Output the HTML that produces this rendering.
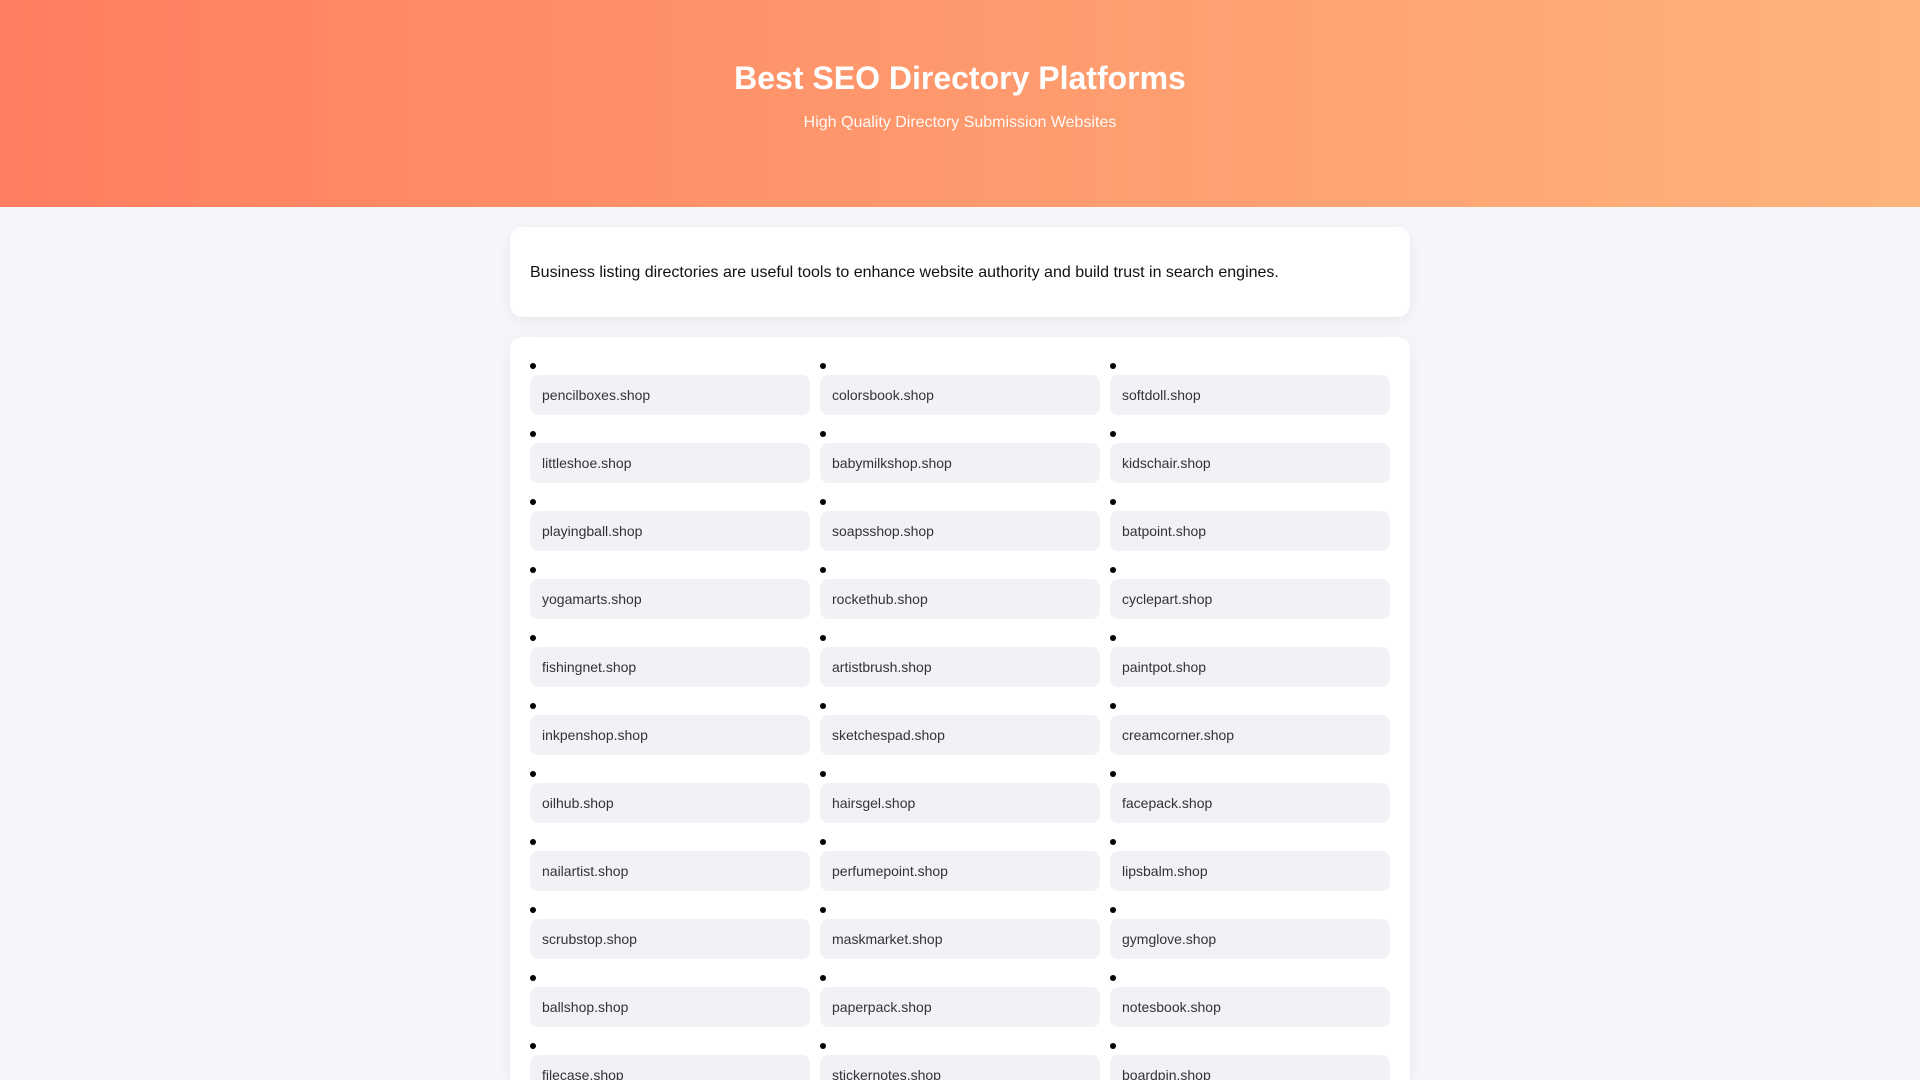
<!DOCTYPE html>
<html><head><meta charset="utf-8"><style>
*{box-sizing:border-box;margin:0;padding:0}
html,body{width:1920px;height:1080px;overflow:hidden}
body{background:#f5f6fa;font-family:"Liberation Sans",Arial,sans-serif;position:relative}
.hd{height:207px;background:linear-gradient(90deg,#ff7e5f,#feb47b);color:#fff;text-align:center}
.hd h1{font-size:32px;font-weight:bold;position:absolute;left:0;right:0;top:59px;line-height:38px}
.hd p{font-size:16px;position:absolute;left:0;right:0;top:113px;line-height:20px;opacity:.95}
.card{position:absolute;left:510px;width:900px;background:#fff;border-radius:12px;box-shadow:0 4px 14px rgba(0,0,0,.06)}
.c1{top:227px;height:90px;padding:1px 20px 0;font-size:16px;line-height:90px;color:#111}
.c2{top:337px;height:743px;padding:20px;overflow:hidden;border-radius:12px 12px 0 0}
.g{display:grid;grid-template-columns:280px 280px 280px;column-gap:10px;row-gap:10px}
.cell{height:58px;position:relative}
.cell i{position:absolute;left:0;top:6px;width:6px;height:6px;border-radius:50%;background:#000}
.cell span{position:absolute;left:0;right:0;top:18px;height:40px;background:#f1f2f6;border-radius:8px;padding:0 12px;font-size:14px;line-height:40px;color:#333}
</style></head><body>
<div class="hd"><h1>Best SEO Directory Platforms</h1><p>High Quality Directory Submission Websites</p></div>
<div class="card c1">Business listing directories are useful tools to enhance website authority and build trust in search engines.</div>
<div class="card c2"><div class="g">
<div class="cell"><i></i><span>pencilboxes.shop</span></div><div class="cell"><i></i><span>colorsbook.shop</span></div><div class="cell"><i></i><span>softdoll.shop</span></div>
<div class="cell"><i></i><span>littleshoe.shop</span></div><div class="cell"><i></i><span>babymilkshop.shop</span></div><div class="cell"><i></i><span>kidschair.shop</span></div>
<div class="cell"><i></i><span>playingball.shop</span></div><div class="cell"><i></i><span>soapsshop.shop</span></div><div class="cell"><i></i><span>batpoint.shop</span></div>
<div class="cell"><i></i><span>yogamarts.shop</span></div><div class="cell"><i></i><span>rockethub.shop</span></div><div class="cell"><i></i><span>cyclepart.shop</span></div>
<div class="cell"><i></i><span>fishingnet.shop</span></div><div class="cell"><i></i><span>artistbrush.shop</span></div><div class="cell"><i></i><span>paintpot.shop</span></div>
<div class="cell"><i></i><span>inkpenshop.shop</span></div><div class="cell"><i></i><span>sketchespad.shop</span></div><div class="cell"><i></i><span>creamcorner.shop</span></div>
<div class="cell"><i></i><span>oilhub.shop</span></div><div class="cell"><i></i><span>hairsgel.shop</span></div><div class="cell"><i></i><span>facepack.shop</span></div>
<div class="cell"><i></i><span>nailartist.shop</span></div><div class="cell"><i></i><span>perfumepoint.shop</span></div><div class="cell"><i></i><span>lipsbalm.shop</span></div>
<div class="cell"><i></i><span>scrubstop.shop</span></div><div class="cell"><i></i><span>maskmarket.shop</span></div><div class="cell"><i></i><span>gymglove.shop</span></div>
<div class="cell"><i></i><span>ballshop.shop</span></div><div class="cell"><i></i><span>paperpack.shop</span></div><div class="cell"><i></i><span>notesbook.shop</span></div>
<div class="cell"><i></i><span>filecase.shop</span></div><div class="cell"><i></i><span>stickernotes.shop</span></div><div class="cell"><i></i><span>boardpin.shop</span></div>
</div></div>
</body></html>
